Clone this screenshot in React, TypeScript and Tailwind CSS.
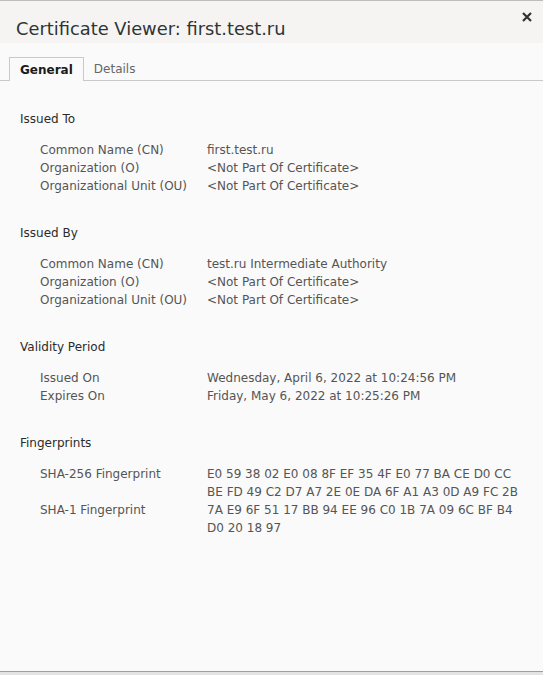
import React from "react";

type Row = { label: string; value: string[] };
type Section = { title: string; rows: Row[] };

const NP = "<Not Part Of Certificate>";

const sections: Section[] = [
  {
    title: "Issued To",
    rows: [
      { label: "Common Name (CN)", value: ["first.test.ru"] },
      { label: "Organization (O)", value: [NP] },
      { label: "Organizational Unit (OU)", value: [NP] },
    ],
  },
  {
    title: "Issued By",
    rows: [
      { label: "Common Name (CN)", value: ["test.ru Intermediate Authority"] },
      { label: "Organization (O)", value: [NP] },
      { label: "Organizational Unit (OU)", value: [NP] },
    ],
  },
  {
    title: "Validity Period",
    rows: [
      { label: "Issued On", value: ["Wednesday, April 6, 2022 at 10:24:56 PM"] },
      { label: "Expires On", value: ["Friday, May 6, 2022 at 10:25:26 PM"] },
    ],
  },
  {
    title: "Fingerprints",
    rows: [
      {
        label: "SHA-256 Fingerprint",
        value: [
          "E0 59 38 02 E0 08 8F EF 35 4F E0 77 BA CE D0 CC",
          "BE FD 49 C2 D7 A7 2E 0E DA 6F A1 A3 0D A9 FC 2B",
        ],
      },
      {
        label: "SHA-1 Fingerprint",
        value: [
          "7A E9 6F 51 17 BB 94 EE 96 C0 1B 7A 09 6C BF B4",
          "D0 20 18 97",
        ],
      },
    ],
  },
];

export default function App() {
  return (
    <div
      className="flex h-[675px] w-[543px] flex-col bg-[#fafafa] text-[12px] leading-[18px]"
      style={{ fontFamily: '"DejaVu Sans", sans-serif' }}
    >
      <header className="relative h-[43px] border-t border-[#bdbdbd] bg-[#f5f4f2]">
        <h1 className="pl-4 pt-[16px] text-[17.85px] leading-[24px] text-[#2e3436]">
          Certificate Viewer: first.test.ru
        </h1>
        <button className="absolute right-[6px] top-[6px] flex h-5 w-5 items-center justify-center text-[#2e3436]">
          <svg width="12" height="12" viewBox="0 0 12 12">
            <path
              d="M2 2l8 8M10 2l-8 8"
              stroke="currentColor"
              strokeWidth="2.2"
            />
          </svg>
        </button>
      </header>

      <div className="flex-1">
        <div className="mt-[14px] flex border-b border-[#c9c9c9] pl-[9px]">
          <div className="-mb-px h-[24px] border border-b-0 border-[#c9c9c9] bg-[#fafafa] px-[10px] pt-px leading-[23px] font-bold text-[#1a1a1a]">
            General
          </div>
          <div className="h-[23px] px-[10px] pt-px leading-[23px] text-[#666]">
            Details
          </div>
        </div>

        <div className="flex flex-col gap-[29px] pl-5 pt-[29px]">
          {sections.map((s) => (
            <section key={s.title}>
              <h2 className="text-[#2b2b2b]">{s.title}</h2>
              <div className="mt-[13px] pl-5">
                {s.rows.map((r) => (
                  <div key={r.label} className="flex text-[#555]">
                    <div className="w-[167px] shrink-0">{r.label}</div>
                    <div>
                      {r.value.map((v) => (
                        <div key={v}>{v}</div>
                      ))}
                    </div>
                  </div>
                ))}
              </div>
            </section>
          ))}
        </div>
      </div>

      <div className="h-px bg-[#9e9e9e]" />
      <div className="h-[3px] bg-[#e4e4e4]" />
    </div>
  );
}
